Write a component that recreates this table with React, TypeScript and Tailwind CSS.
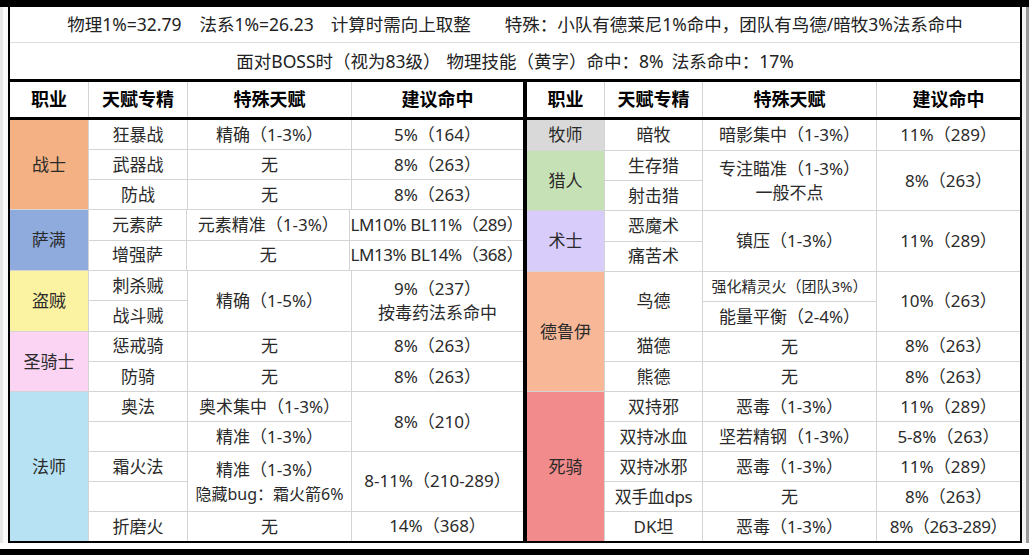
import type { ReactNode } from "react";

type Cell = { t: ReactNode; span?: number; small?: boolean; tight?: boolean };
type Group = { name: string; bg: string; rows: number; spec: Cell[]; special: Cell[]; hit: Cell[] };

const grow: Record<number, string> = {
    1: "flex-[1_1_0%]",
    2: "flex-[2_2_0%]",
    3: "flex-[3_3_0%]",
    4: "flex-[4_4_0%]",
    5: "flex-[5_5_0%]",
};

const leftGroups: Group[] = [
    {
        name: "战士", bg: "bg-[#f4b183]", rows: 3,
        spec: [{ t: "狂暴战" }, { t: "武器战" }, { t: "防战" }],
        special: [{ t: "精确（1-3%）" }, { t: "无" }, { t: "无" }],
        hit: [{ t: "5%（164）" }, { t: "8%（263）" }, { t: "8%（263）" }],
    },
    {
        name: "萨满", bg: "bg-[#8faadc]", rows: 2,
        spec: [{ t: "元素萨" }, { t: "增强萨" }],
        special: [{ t: "元素精准（1-3%）" }, { t: "无" }],
        hit: [{ t: "LM10% BL11%（289）", tight: true }, { t: "LM13% BL14%（368）", tight: true }],
    },
    {
        name: "盗贼", bg: "bg-[#fcf3a2]", rows: 2,
        spec: [{ t: "刺杀贼" }, { t: "战斗贼" }],
        special: [{ t: "精确（1-5%）", span: 2 }],
        hit: [{ t: <>9%（237）<br />按毒药法系命中</>, span: 2 }],
    },
    {
        name: "圣骑士", bg: "bg-[#fbd4f4]", rows: 2,
        spec: [{ t: "惩戒骑" }, { t: "防骑" }],
        special: [{ t: "无" }, { t: "无" }],
        hit: [{ t: "8%（263）" }, { t: "8%（263）" }],
    },
    {
        name: "法师", bg: "bg-[#b7e2f4]", rows: 5,
        spec: [{ t: "奥法" }, { t: "" }, { t: "霜火法" }, { t: "" }, { t: "折磨火" }],
        special: [
            { t: "奥术集中（1-3%）" },
            { t: "精准（1-3%）" },
            { t: <>精准（1-3%）<br /><span className="text-[16px]">隐藏bug：霜火箭6%</span></>, span: 2 },
            { t: "无" },
        ],
        hit: [{ t: "8%（210）", span: 2 }, { t: "8-11%（210-289）", span: 2 }, { t: "14%（368）" }],
    },
];

const rightGroups: Group[] = [
    {
        name: "牧师", bg: "bg-[#d9d9d9]", rows: 1,
        spec: [{ t: "暗牧" }],
        special: [{ t: "暗影集中（1-3%）" }],
        hit: [{ t: "11%（289）" }],
    },
    {
        name: "猎人", bg: "bg-[#c7e1b6]", rows: 2,
        spec: [{ t: "生存猎" }, { t: "射击猎" }],
        special: [{ t: <>专注瞄准（1-3%）<br />一般不点</>, span: 2 }],
        hit: [{ t: "8%（263）", span: 2 }],
    },
    {
        name: "术士", bg: "bg-[#d8ccfb]", rows: 2,
        spec: [{ t: "恶魔术" }, { t: "痛苦术" }],
        special: [{ t: "镇压（1-3%）", span: 2 }],
        hit: [{ t: "11%（289）", span: 2 }],
    },
    {
        name: "德鲁伊", bg: "bg-[#f8b898]", rows: 4,
        spec: [{ t: "鸟德", span: 2 }, { t: "猫德" }, { t: "熊德" }],
        special: [{ t: "强化精灵火（团队3%）", small: true }, { t: "能量平衡（2-4%）" }, { t: "无" }, { t: "无" }],
        hit: [{ t: "10%（263）", span: 2 }, { t: "8%（263）" }, { t: "8%（263）" }],
    },
    {
        name: "死骑", bg: "bg-[#f28b8b]", rows: 5,
        spec: [{ t: "双持邪" }, { t: "双持冰血" }, { t: "双持冰邪" }, { t: "双手血dps", tight: true }, { t: "DK坦" }],
        special: [{ t: "恶毒（1-3%）" }, { t: "坚若精钢（1-3%）" }, { t: "恶毒（1-3%）" }, { t: "无" }, { t: "恶毒（1-3%）" }],
        hit: [{ t: "11%（289）" }, { t: "5-8%（263）" }, { t: "11%（289）" }, { t: "8%（263）" }, { t: "8%（263-289）", tight: true }],
    },
];

const Column = ({ cells, width }: { cells: Cell[]; width: string }) => (
    <div className={`flex flex-col divide-y divide-[#d4d4d4] ${width}`}>
        {cells.map((c, i) => (
            <div
                key={i}
                className={`flex items-center justify-center text-center leading-[1.4] ${grow[c.span ?? 1]} ${c.small ? "text-[15px]" : ""} ${c.tight ? "tracking-[-0.4px]" : ""}`}
            >
                <div className="whitespace-nowrap">{c.t}</div>
            </div>
        ))}
    </div>
);

const Table = ({ groups, cols, className }: { groups: Group[]; cols: string[]; className: string }) => (
    <div className={`flex flex-col ${className}`}>
        <div className="flex h-[38px] divide-x divide-[#d4d4d4] border-b-[3px] border-black text-[18px] font-bold text-black">
            <div className={`flex items-center justify-center ${cols[0]}`}>职业</div>
            <div className={`flex items-center justify-center ${cols[1]}`}>天赋专精</div>
            <div className={`flex items-center justify-center ${cols[2]}`}>特殊天赋</div>
            <div className={`flex items-center justify-center ${cols[3]}`}>建议命中</div>
        </div>
        <div className="flex h-[421px] flex-col divide-y divide-[#d4d4d4] text-[17px] text-[#2a2a2a]">
            {groups.map((g) => (
                <div key={g.name} className={`flex divide-x divide-[#d4d4d4] ${grow[g.rows]}`}>
                    <div className={`flex items-center justify-center ${g.bg} ${cols[0]}`}>{g.name}</div>
                    <Column cells={g.spec} width={cols[1]} />
                    <Column cells={g.special} width={cols[2]} />
                    <Column cells={g.hit} width={cols[3]} />
                </div>
            ))}
        </div>
    </div>
);

export default function App() {
    return (
        <div className="flex h-[555px] w-[1029px] flex-col overflow-hidden bg-black font-['Noto_Sans','Noto_Sans_CJK_SC',sans-serif]">
            <div className="h-[7px] shrink-0" />
            <div className="flex h-[536px] shrink-0 bg-white">
                <div className="w-[8px] border-l-[3px] border-[#e6e6e6] bg-[#fafafa]" />
                <div className="flex w-[1014px] flex-col border-x-2 border-b-2 border-black">
                    <div className="flex h-[36px] shrink-0 items-center justify-center border-b border-[#dedede] text-[17.5px] text-[#222]">
                        <span>物理1%=32.79</span>
                        <span className="ml-[18px]">法系1%=26.23</span>
                        <span className="ml-[17px]">计算时需向上取整</span>
                        <span className="ml-[34px]">特殊：小队有德莱尼1%命中，团队有鸟德/暗牧3%法系命中</span>
                    </div>
                    <div className="flex h-[39px] shrink-0 items-center justify-center border-b-[3px] border-black text-[17.5px] text-[#222]">
                        <span>面对BOSS时（视为83级）</span>
                        <span className="ml-[6px]">物理技能（黄字）命中：8%</span>
                        <span className="ml-[8px]">法系命中：17%</span>
                    </div>
                    <div className="flex flex-1">
                        <Table
                            groups={leftGroups}
                            cols={["w-[79px]", "w-[99px]", "w-[164px]", "flex-1"]}
                            className="w-[517px] border-r-4 border-black"
                        />
                        <Table
                            groups={rightGroups}
                            cols={["w-[78px]", "w-[98px]", "w-[174px]", "flex-1"]}
                            className="flex-1"
                        />
                    </div>
                </div>
                <div className="w-[7px] border-r-[3px] border-[#9a9a9a] bg-[#f4f4f4]" />
            </div>
            <div className="h-[6px] shrink-0 bg-white" />
            <div className="flex-1" />
        </div>
    );
}
